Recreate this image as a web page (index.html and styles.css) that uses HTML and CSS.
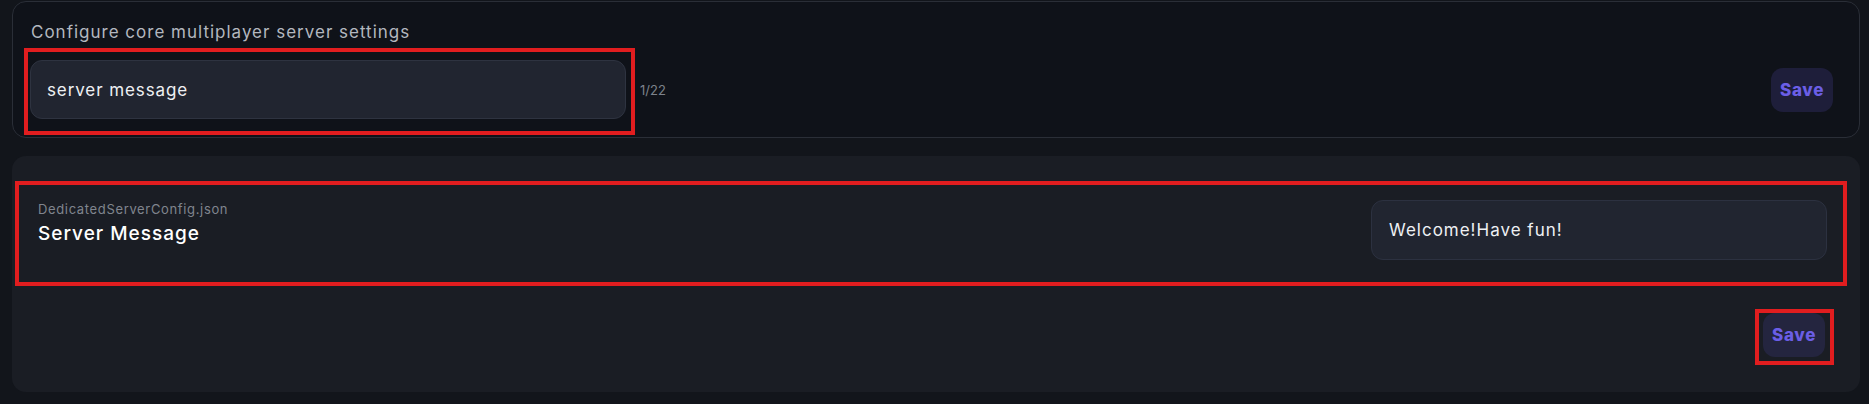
FILE: index.html
```html
<!DOCTYPE html>
<html>
<head>
<meta charset="utf-8">
<link rel="stylesheet" href="styles.css">
</head>
<body>
  <section class="card card-top">
    <p class="card-desc">Configure core multiplayer server settings</p>
    <div class="search-row">
      <div class="search-input">server message</div>
      <span class="counter">1/22</span>
      <button class="save-btn">Save</button>
    </div>
  </section>

  <section class="card card-settings">
    <div class="setting-row">
      <div class="setting-label">
        <div class="setting-file">DedicatedServerConfig.json</div>
        <div class="setting-name">Server Message</div>
      </div>
      <div class="setting-input">Welcome!Have fun!</div>
    </div>
    <div class="settings-footer">
      <button class="save-btn save-btn-alt">Save</button>
    </div>
  </section>

  <div class="mark mark-search"></div>
  <div class="mark mark-row"></div>
  <div class="mark mark-save"></div>
</body>
</html>
```

FILE: styles.css
```css
* { box-sizing: border-box; }

html, body {
  margin: 0;
  background: #12151b;
}

body {
  padding: 1px 9px 0 12px;
  font-family: "Inter", "Open Sans", sans-serif;
  color: #e8eaee;
  height: 404px;
  overflow: hidden;
}

.card {
  border-radius: 14px;
}

.card-top {
  background: #0f1219;
  border: 1px solid #2a2e37;
  padding: 18px 26px 18px 17px;
}

.card-desc {
  margin: 0 0 17px 0;
  padding-top: 1px;
  font-size: 17px;
  line-height: 22px;
  letter-spacing: 1px;
  color: #b3b7bf;
  padding-left: 1px;
}

.search-row {
  display: flex;
  align-items: center;
}

.search-input {
  width: 596px;
  height: 59px;
  background: #212530;
  border: 1px solid #2e3340;
  border-radius: 12px;
  padding: 0 16px;
  display: flex;
  align-items: center;
  font-size: 17px;
  letter-spacing: 0.9px;
  color: #eef0f3;
}

.counter {
  margin-left: 14px;
  font-size: 13px;
  color: #7d828c;
}

.save-btn {
  margin-left: auto;
  width: 62px;
  height: 44px;
  border: none;
  border-radius: 12px;
  background: #1e1e3a;
  color: #6b5ee6;
  font-family: "Inter", "Open Sans", sans-serif;
  font-weight: 800;
  font-size: 17px;
  letter-spacing: 0.7px;
  padding: 0;
}

.save-btn-alt {
  background: #24253f;
  margin-right: 2px;
}

.card-settings {
  margin-top: 18px;
  background: #1a1d24;
  padding: 44px 33px 35px 26px;
}

.setting-row {
  display: flex;
  justify-content: space-between;
  align-items: flex-start;
}

.setting-label {
  display: flex;
  flex-direction: column;
  gap: 5px;
  padding-top: 1px;
}

.setting-file {
  font-size: 13px;
  line-height: 16px;
  letter-spacing: 0.65px;
  color: #80858e;
}

.setting-name {
  font-size: 19px;
  line-height: 24px;
  font-weight: 500;
  letter-spacing: 1px;
  color: #ffffff;
}

.setting-input {
  width: 456px;
  height: 60px;
  background: #212530;
  border: 1px solid #2c3140;
  border-radius: 12px;
  padding: 0 17px;
  display: flex;
  align-items: center;
  font-size: 17px;
  letter-spacing: 1px;
  color: #eef0f3;
}

.settings-footer {
  margin-top: 53px;
  display: flex;
  justify-content: flex-end;
}

.mark {
  position: absolute;
  border: 4px solid #e11d1f;
  pointer-events: none;
}

.mark-search { left: 24px; top: 48px; width: 611px; height: 87px; }
.mark-row { left: 15px; top: 181px; width: 1832px; height: 105px; }
.mark-save { left: 1755px; top: 309px; width: 79px; height: 56px; }
```
